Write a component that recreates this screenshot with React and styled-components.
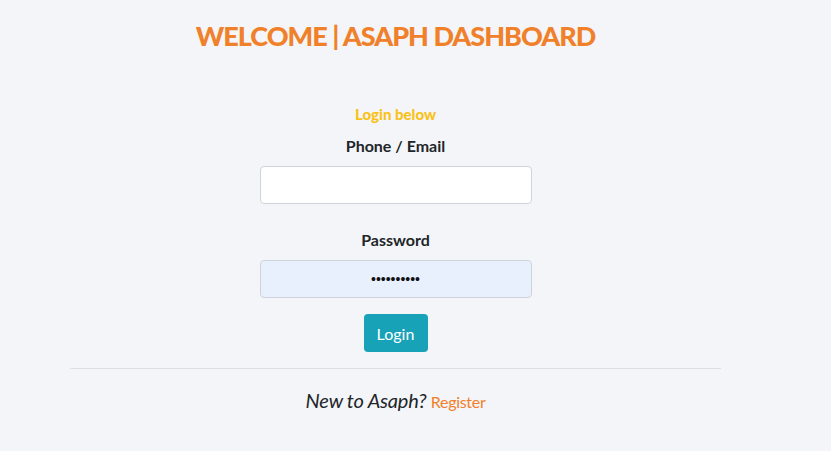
import styled, { createGlobalStyle } from 'styled-components'

const GlobalStyle = createGlobalStyle`
  * {
    box-sizing: border-box;
  }
  html, body {
    margin: 0;
    padding: 0;
    background: #f4f5f8;
  }
  body {
    font-family: Lato, "Open Sans", sans-serif;
    color: #212529;
  }
`

const Page = styled.div`
  width: 831px;
  height: 451px;
  padding: 16px 0 0 70px;
  background: #f4f5f8;
`

const Column = styled.div`
  width: 651px;
  display: flex;
  flex-direction: column;
  align-items: center;
`

const Title = styled.h1`
  margin: 0;
  font-size: 27px;
  font-weight: 900;
  letter-spacing: -1px;
  line-height: 40px;
  color: #f0802a;
`

const Form = styled.form`
  margin-top: 48px;
  display: flex;
  flex-direction: column;
  align-items: center;
  width: 272px;
`

const Hint = styled.div`
  font-size: 15px;
  font-weight: 900;
  line-height: 20px;
  color: #f9c21a;
`

const Label = styled.label`
  margin-top: ${props => props.gap || '12px'};
  font-size: 16px;
  font-weight: 700;
  line-height: 20px;
  color: #212529;
`

const Input = styled.input`
  margin-top: 10px;
  width: 272px;
  height: 38px;
  border: 1px solid #ced4da;
  border-radius: 4px;
  background: ${props => props.$autofill ? '#e8f0fe' : '#ffffff'};
  text-align: center;
  font-family: ${props => props.type === 'password' ? '"Liberation Sans", Arial, sans-serif' : 'inherit'};
  font-size: ${props => props.type === 'password' ? '14px' : '16px'};
  color: #111;
  outline: none;
`

const Button = styled.button`
  margin-top: 16px;
  width: 64px;
  height: 38px;
  border: none;
  border-radius: 4px;
  background: #17a2b8;
  color: #ffffff;
  font-family: inherit;
  font-size: 16px;
`

const Rule = styled.hr`
  margin: 16px 0 0;
  width: 100%;
  border: none;
  border-top: 1px solid #dcdfe3;
`

const Footer = styled.p`
  margin: 18px 0 0;
  font-size: 20px;
  font-style: italic;
  line-height: 26px;
  letter-spacing: -0.2px;
  color: #212529;
`

const Link = styled.a`
  font-size: 16px;
  font-style: normal;
  letter-spacing: -0.3px;
  color: #f0802a;
  text-decoration: none;
`

function App() {
  return (
    <>
      <GlobalStyle />
      <Page>
        <Column>
          <Title>WELCOME | ASAPH DASHBOARD</Title>
          <Form onSubmit={(e) => e.preventDefault()}>
            <Hint>Login below</Hint>
            <Label gap="12px">Phone / Email</Label>
            <Input type="text" />
            <Label gap="26px">Password</Label>
            <Input type="password" $autofill defaultValue="1234567890" />
            <Button type="submit">Login</Button>
          </Form>
          <Rule />
          <Footer>
            New to Asaph? <Link href="#">Register</Link>
          </Footer>
        </Column>
      </Page>
    </>
  )
}

export default App
